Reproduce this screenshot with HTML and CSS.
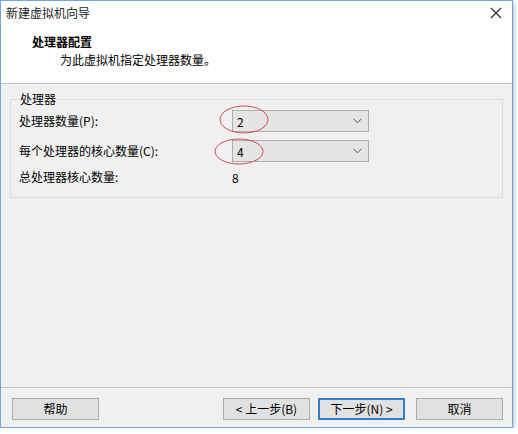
FILE: index.html
```html
<!DOCTYPE html>
<html lang="zh-CN">
  <head>
    <meta charset="UTF-8" />
    <meta name="viewport" content="width=device-width, initial-scale=1.0" />
    <title>新建虚拟机向导</title>
    <link rel="stylesheet" href="styles.css">
  </head>
  <body>
    <div class="window">
      <div class="titlebar">
        <span class="title">新建虚拟机向导</span>
        <svg class="close" width="12" height="12" viewBox="0 0 12 12">
          <path d="M1 1L11 11M11 1L1 11" stroke="#222" stroke-width="1.1" fill="none" />
        </svg>
      </div>

      <div class="header">
        <div class="header-title">处理器配置</div>
        <div class="header-sub">为此虚拟机指定处理器数量。</div>
      </div>

      <div class="content">
        <fieldset class="group">
          <legend>处理器</legend>
          <div class="row">
            <label class="row-label">处理器数量(P):</label>
            <div class="combo">
              <span>2</span>
              <svg class="chevron" width="9" height="6" viewBox="0 0 9 6">
                <path d="M0.5 0.8L4.5 4.8L8.5 0.8" stroke="#555" stroke-width="1" fill="none" />
              </svg>
            </div>
          </div>
          <div class="row">
            <label class="row-label">每个处理器的核心数量(C):</label>
            <div class="combo">
              <span>4</span>
              <svg class="chevron" width="9" height="6" viewBox="0 0 9 6">
                <path d="M0.5 0.8L4.5 4.8L8.5 0.8" stroke="#555" stroke-width="1" fill="none" />
              </svg>
            </div>
          </div>
          <div class="row row-text">
            <span class="row-label">总处理器核心数量:</span>
            <span class="value">8</span>
          </div>
        </fieldset>
      </div>

      <div class="footer">
        <button class="btn">帮助</button>
        <div class="nav">
          <button class="btn">&lt; 上一步(B)</button>
          <button class="btn btn-default">下一步(N) &gt;</button>
          <button class="btn btn-cancel">取消</button>
        </div>
      </div>

      <!-- red marks drawn over the screenshot -->
      <svg class="marks" width="513" height="428" viewBox="0 0 513 428">
        <ellipse cx="244" cy="119.5" rx="24" ry="13.5" stroke="#d24b55" stroke-width="1" fill="none" />
        <ellipse cx="239" cy="151.5" rx="24" ry="12.5" stroke="#d24b55" stroke-width="1" fill="none" />
      </svg>
    </div>
  </body>
</html>
```

FILE: styles.css
```css
body {
  margin: 0;
  background: #fff;
  font-family: "Noto Sans CJK SC", "Liberation Sans", sans-serif;
  font-size: 12px;
  color: #000;
}
.window {
  position: relative;
  width: 513px;
  height: 428px;
  box-sizing: border-box;
  border: 1px solid #6fa6dc;
  background: #f0f0f0;
  display: flex;
  flex-direction: column;
  box-shadow: 1px 2px 4px rgba(0, 0, 0, 0.3);
}
.titlebar {
  height: 27px;
  box-sizing: border-box;
  padding: 4px 0 0 5px;
  background: #fff;
  display: flex;
  justify-content: space-between;
  line-height: 16px;
  color: #222;
}
.close {
  margin: 2px 10px 0 0;
}
.header {
  height: 56px;
  box-sizing: border-box;
  padding: 6px 0 0 31px;
  background: #fff;
  border-bottom: 1px solid #c4c4c4;
  line-height: 16px;
}
.header-title {
  font-weight: bold;
}
.header-sub {
  margin-top: 2px;
  padding-left: 28px;
}
.content {
  flex: 1;
  padding: 7px 9px 0;
}
.group {
  margin: 0;
  padding: 0 8px 12px;
  border: 1px solid #dcdcdc;
}
.group legend {
  padding: 0 1px;
  line-height: 16px;
}
.row {
  display: flex;
  align-items: center;
  height: 22px;
  margin-top: 3px;
}
.row + .row {
  margin-top: 8px;
}
.row.row-text {
  height: 16px;
  margin-top: 7px;
}
.row-label {
  width: 213px;
  flex: none;
  line-height: 16px;
}
.combo {
  width: 137px;
  height: 22px;
  box-sizing: border-box;
  border: 1px solid #adadad;
  background: #e5e5e5;
  padding: 0 6px 0 4px;
  display: flex;
  align-items: center;
  justify-content: space-between;
}
.value {
  padding-left: 0;
}
.footer {
  height: 40px;
  box-sizing: border-box;
  border-top: 1px solid #c4c4c4;
  padding: 10px 9px 0 11px;
  display: flex;
  justify-content: space-between;
  align-items: flex-start;
}
.nav {
  display: flex;
}
.btn {
  width: 87px;
  height: 22px;
  box-sizing: border-box;
  border: 1px solid #adadad;
  background: #e1e1e1;
  font-family: inherit;
  font-size: 12px;
  color: #000;
  padding: 0;
  line-height: 18px;
}
.btn-default {
  margin-left: 8px;
  border-color: #2f7fca;
  box-shadow: inset 0 0 0 1px #2f7fca;
}
.btn-cancel {
  margin-left: 11px;
}
.marks {
  position: absolute;
  left: -1px;
  top: -1px;
  pointer-events: none;
}
```
